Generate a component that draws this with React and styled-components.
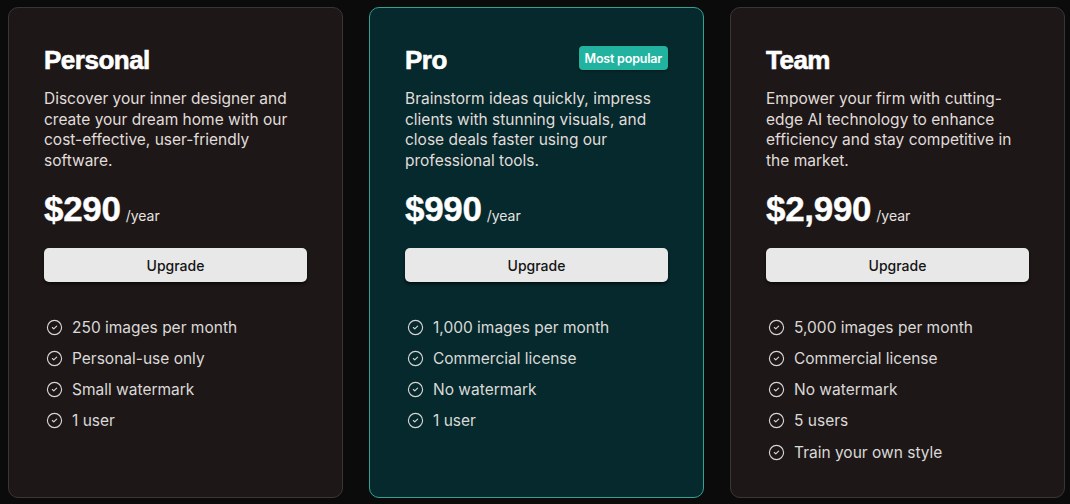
import React from 'react';
import styled, { createGlobalStyle } from 'styled-components';
import { CircleCheck } from 'lucide-react';

const GlobalStyle = createGlobalStyle`
  html, body {
    margin: 0;
    padding: 0;
    background: #0c0b0b;
  }
  body {
    font-family: Inter, "Liberation Sans", sans-serif;
    -webkit-font-smoothing: antialiased;
  }
`;

const plans = [
  {
    name: 'Personal',
    description: 'Discover your inner designer and create your dream home with our cost-effective, user-friendly software.',
    price: '$290',
    features: ['250 images per month', 'Personal-use only', 'Small watermark', '1 user'],
  },
  {
    name: 'Pro',
    featured: true,
    description: 'Brainstorm ideas quickly, impress clients with stunning visuals, and close deals faster using our professional tools.',
    price: '$990',
    features: ['1,000 images per month', 'Commercial license', 'No watermark', '1 user'],
  },
  {
    name: 'Team',
    description: 'Empower your firm with cutting-edge AI technology to enhance efficiency and stay competitive in the market.',
    price: '$2,990',
    features: ['5,000 images per month', 'Commercial license', 'No watermark', '5 users', 'Train your own style'],
  },
];

const Page = styled.div`
  display: grid;
  grid-template-columns: repeat(3, 335px);
  gap: 26px;
  padding: 7px 0 6px 8px;
`;

const Card = styled.div`
  box-sizing: border-box;
  height: 491px;
  padding: 36px 35px 0 35px;
  border-radius: 10px;
  background: ${(p) => (p.featured ? '#05292c' : '#1d1817')};
  border: ${(p) => (p.featured ? '1.5px solid #33a291' : '1px solid #3b3634')};
  display: flex;
  flex-direction: column;
`;

const Header = styled.div`
  display: flex;
  align-items: center;
  justify-content: space-between;
  height: 32px;
`;

const Title = styled.h2`
  margin: 0;
  font-family: "Liberation Sans", Arial, sans-serif;
  font-weight: 700;
  font-size: 26px;
  letter-spacing: -0.5px;
  color: #ffffff;
  -webkit-text-stroke: 0.6px #ffffff;
`;

const Badge = styled.span`
  display: inline-flex;
  align-items: center;
  height: 24px;
  padding: 0 6px;
  margin-top: -4px;
  border-radius: 4px;
  background: #22b3a0;
  color: #ffffff;
  font-size: 12.5px;
  font-weight: 600;
  letter-spacing: -0.2px;
  box-shadow: 0 1px 2px rgba(0, 0, 0, 0.5);
`;

const Description = styled.p`
  margin: 13px 0 0;
  font-size: 15.5px;
  line-height: 20.6px;
  color: #e0dddb;
  min-height: 82px;
`;

const PriceRow = styled.div`
  margin-top: 18px;
  display: flex;
  align-items: baseline;
  gap: 5px;
  height: 40px;
`;

const Price = styled.span`
  font-family: "Liberation Sans", Arial, sans-serif;
  font-weight: 700;
  font-size: 35px;
  color: #ffffff;
  letter-spacing: -0.3px;
  -webkit-text-stroke: 0.4px #ffffff;
`;

const Period = styled.span`
  font-size: 14px;
  color: #e6e3e1;
`;

const Button = styled.button`
  margin-top: 19px;
  height: 34px;
  width: 100%;
  border: none;
  border-radius: 5px;
  background: #e8e8e8;
  color: #141414;
  font-family: Inter, sans-serif;
  font-size: 14px;
  font-weight: 500;
  box-shadow: 0 2px 3px rgba(0, 0, 0, 0.6);
  cursor: pointer;
`;

const Features = styled.ul`
  list-style: none;
  margin: 29px 0 0;
  padding: 0 0 0 2px;
  display: flex;
  flex-direction: column;
`;

const Feature = styled.li`
  display: flex;
  align-items: center;
  gap: 9px;
  height: 31.3px;
  font-size: 15.5px;
  color: #dbd9d7;

  svg {
    flex-shrink: 0;
    color: #d8d6d4;
  }
`;

function PlanCard({ plan }) {
  return (
    <Card featured={plan.featured}>
      <Header>
        <Title>{plan.name}</Title>
        {plan.featured && <Badge>Most popular</Badge>}
      </Header>
      <Description>{plan.description}</Description>
      <PriceRow>
        <Price>{plan.price}</Price>
        <Period>/year</Period>
      </PriceRow>
      <Button>Upgrade</Button>
      <Features>
        {plan.features.map((f) => (
          <Feature key={f}>
            <CircleCheck size={17} strokeWidth={1.6} />
            {f}
          </Feature>
        ))}
      </Features>
    </Card>
  );
}

export default function App() {
  return (
    <>
      <GlobalStyle />
      <Page>
        {plans.map((p) => (
          <PlanCard key={p.name} plan={p} />
        ))}
      </Page>
    </>
  );
}
